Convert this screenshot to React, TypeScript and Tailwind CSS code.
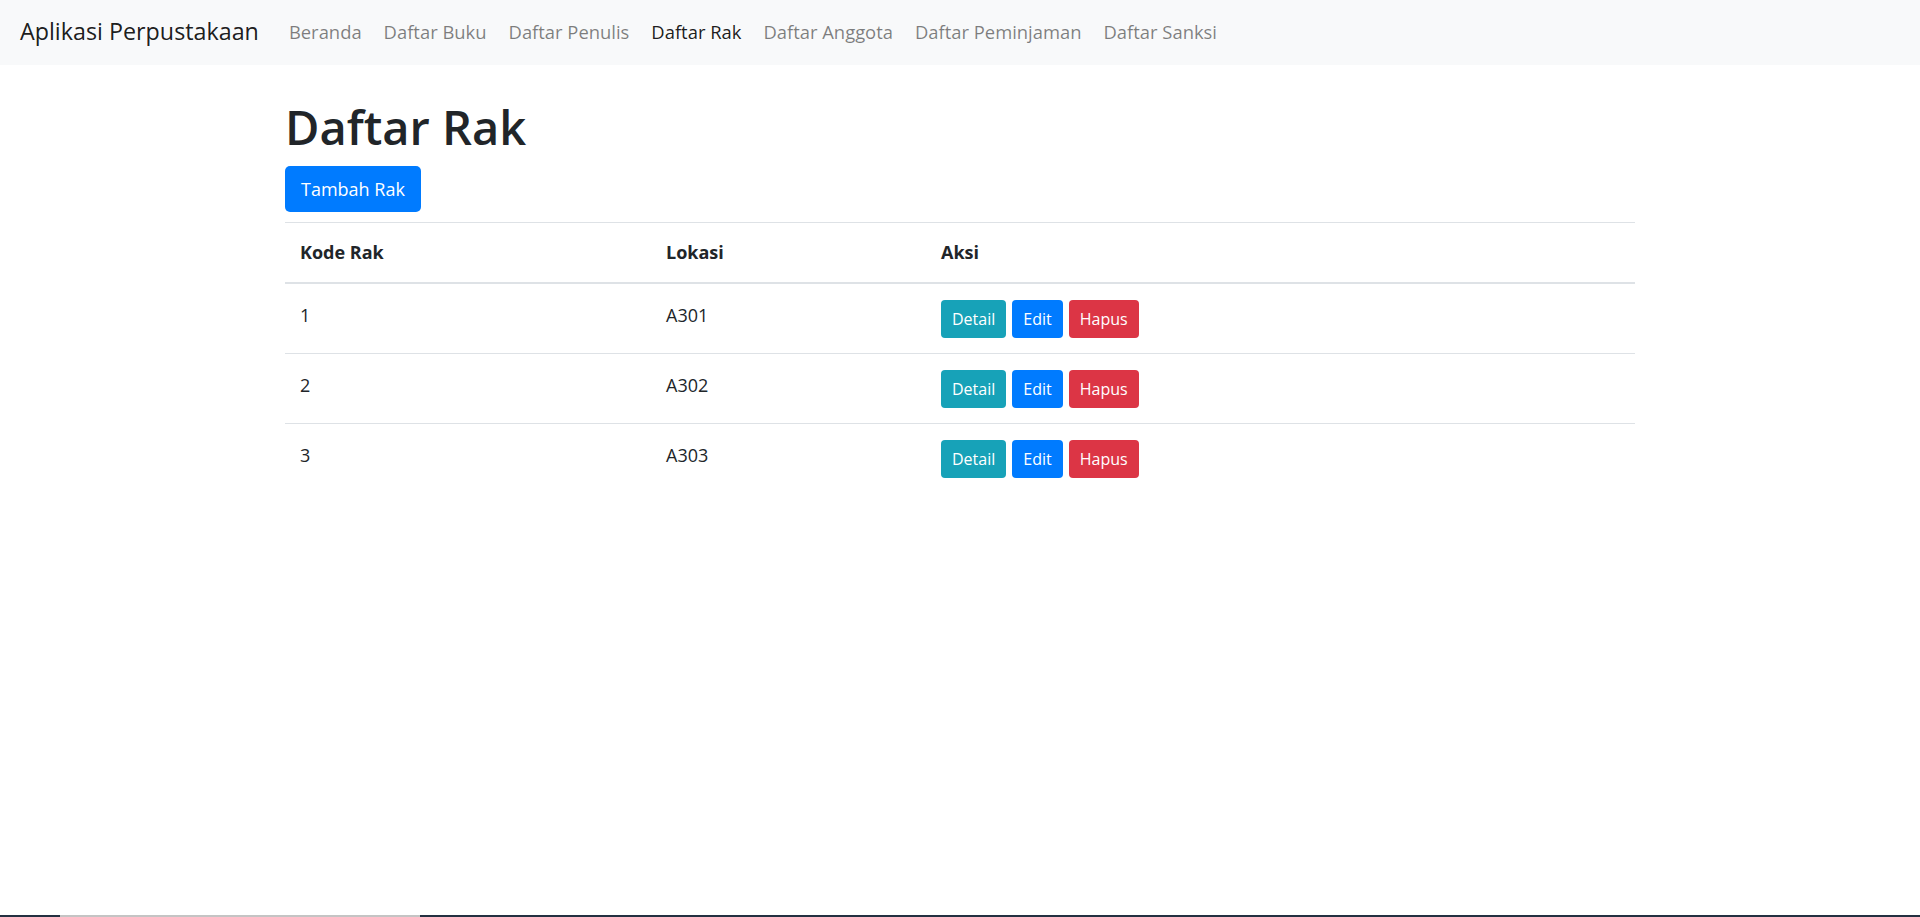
import React from "react";

const links = [
  { label: "Beranda", active: false },
  { label: "Daftar Buku", active: false },
  { label: "Daftar Penulis", active: false },
  { label: "Daftar Rak", active: true },
  { label: "Daftar Anggota", active: false },
  { label: "Daftar Peminjaman", active: false },
  { label: "Daftar Sanksi", active: false },
];

const rows = [
  { kode: "1", lokasi: "A301" },
  { kode: "2", lokasi: "A302" },
  { kode: "3", lokasi: "A303" },
];

export default function App() {
  return (
    <div
      className="flex h-[917px] flex-col overflow-hidden bg-white text-[#212529]"
      style={{ fontFamily: '"Open Sans", "Noto Sans", sans-serif' }}
    >
      <nav className="flex h-[65px] shrink-0 items-center bg-[#f8f9fa] pb-[3px] pl-[20px]">
        <span className="mr-[19px] text-[23.3px] leading-[30px] text-[#000000e6]">
          Aplikasi Perpustakaan
        </span>
        <div className="flex items-center">
          {links.map((l) => (
            <span
              key={l.label}
              className={
                "px-[11px] text-[18.4px] leading-[27px] " +
                (l.active ? "text-[#000000e6]" : "text-[#00000080]")
              }
            >
              {l.label}
            </span>
          ))}
        </div>
      </nav>

      <main className="mx-auto w-[1350px] pt-[33px]">
        <h1 className="text-[47px] font-semibold leading-[58px] text-[#212529]">
          Daftar Rak
        </h1>
        <div className="mt-[10px] flex">
          <button className="flex h-[46px] items-center rounded-[5px] bg-[#007bff] px-[16px] text-[18px] text-white">
            Tambah Rak
          </button>
        </div>

        <table className="mt-[10px] w-full border-collapse text-left">
          <colgroup>
            <col className="w-[366px]" />
            <col className="w-[275px]" />
            <col />
          </colgroup>
          <thead>
            <tr className="border-t border-[#dee2e6]">
              <th className="h-[60px] border-b-2 border-[#dee2e6] px-[15px] align-middle text-[18px] font-bold leading-[28px]">
                Kode Rak
              </th>
              <th className="h-[60px] border-b-2 border-[#dee2e6] px-[15px] align-middle text-[18px] font-bold leading-[28px]">
                Lokasi
              </th>
              <th className="h-[60px] border-b-2 border-[#dee2e6] px-[15px] align-middle text-[18px] font-bold leading-[28px]">
                Aksi
              </th>
            </tr>
          </thead>
          <tbody>
            {rows.map((r, i) => (
              <tr key={r.kode} className={i === 0 ? "" : "border-t border-[#dee2e6]"}>
                <td className="px-[15px] pb-[15px] pt-[16px] align-top text-[18px] leading-[31px]">
                  {r.kode}
                </td>
                <td className="px-[15px] pb-[15px] pt-[16px] align-top text-[18px] leading-[31px]">
                  {r.lokasi}
                </td>
                <td className="px-[15px] pb-[15px] pt-[16px] align-top">
                  <div className="flex gap-[6px]">
                    <button className="flex h-[38px] items-center rounded-[4px] bg-[#17a2b8] px-[11px] text-[16px] text-white">
                      Detail
                    </button>
                    <button className="flex h-[38px] items-center rounded-[4px] bg-[#007bff] px-[11px] text-[16px] text-white">
                      Edit
                    </button>
                    <button className="flex h-[38px] items-center rounded-[4px] bg-[#dc3545] px-[11px] text-[16px] text-white">
                      Hapus
                    </button>
                  </div>
                </td>
              </tr>
            ))}
          </tbody>
        </table>
      </main>

      <div className="mt-auto flex h-[2px] shrink-0">
        <div className="w-[60px] bg-[#243041]" />
        <div className="w-[360px] bg-[#c4c4c4]" />
        <div className="flex-1 bg-[#243041]" />
      </div>
    </div>
  );
}
